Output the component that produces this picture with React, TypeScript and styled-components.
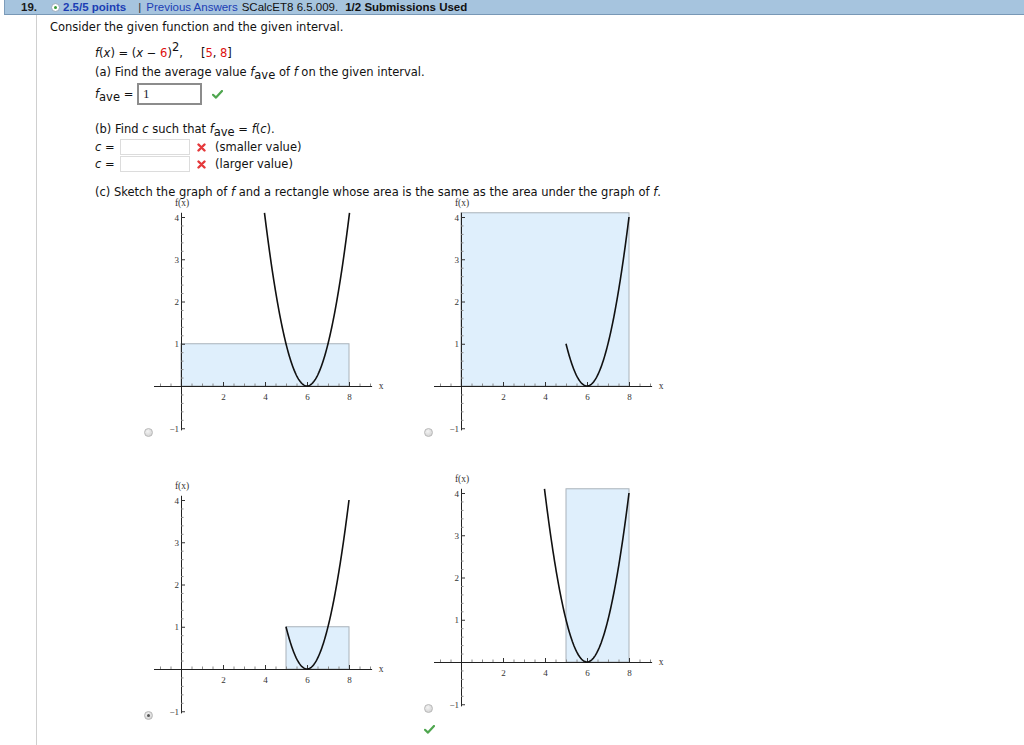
import React from 'react';
import styled, { createGlobalStyle } from 'styled-components';

const GlobalStyle = createGlobalStyle`
  html, body {
    margin: 0;
    padding: 0;
    background: #fff;
  }
  body {
    font-family: "DejaVu Sans", Verdana, sans-serif;
    color: #111;
  }
`;

const Page = styled.div`
  display: flex;
  flex-direction: column;
  width: 1024px;
  height: 745px;
  overflow: hidden;
`;

const HeaderBar = styled.div`
  display: flex;
  align-items: center;
  margin-left: 4px;
  height: 14px;
  padding-left: 16px;
  background: #a6c4de;
  border-left: 1px solid #7e9dbb;
  border-bottom: 1px solid #7898b6;
  font-family: "Liberation Sans", Arial, sans-serif;
  font-size: 11.5px;
  line-height: 14px;
  white-space: nowrap;
`;

const QNum = styled.span`
  font-weight: bold;
  color: #1a1a1a;
  width: 30px;
`;

const Points = styled.span`
  display: flex;
  align-items: center;
  gap: 3px;
  font-weight: bold;
  color: #1b3db4;
`;

const Dot = styled.span`
  position: relative;
  width: 7px;
  height: 7px;
  border-radius: 50%;
  background: #fff;
  border: 1px solid #9ab;
  &::after {
    content: '';
    position: absolute;
    left: 2px;
    top: 2px;
    width: 3px;
    height: 3px;
    border-radius: 50%;
    background: #3a9a3a;
  }
`;

const Sep = styled.span`
  color: #333;
  margin: 0 5px 0 12px;
`;

const Link = styled.span`
  color: #1b3db4;
  margin-right: 4px;
`;

const Plain = styled.span<{ $bold?: boolean }>`
  color: #111;
  font-weight: ${(p) => (p.$bold ? 'bold' : 'normal')};
  margin-right: 7px;
`;

const Main = styled.div`
  flex: 1;
  margin-left: 36px;
  border-left: 1px solid #cfcfcf;
  padding-left: 13px;
  font-size: 11.5px;
`;

const Row = styled.div<{ $top: number; $h: number; $indent?: boolean }>`
  display: flex;
  align-items: center;
  margin-top: ${(p) => p.$top}px;
  height: ${(p) => p.$h}px;
  padding-left: ${(p) => (p.$indent ? 45 : 0)}px;
  line-height: 16px;
  white-space: nowrap;
`;

const Text = styled.span`
  display: inline-block;
  line-height: 16px;
`;

const I = styled.i`
  font-style: italic;
`;

const Red = styled.span`
  color: #e01010;
`;

const Sub = styled.sub`
  font-size: 11.5px;
  vertical-align: -3px;
  line-height: 0;
`;

const Sup = styled.sup`
  font-size: 11.5px;
  vertical-align: 6px;
  line-height: 0;
`;

const Gap = styled.span<{ $w: number }>`
  display: inline-block;
  width: ${(p) => p.$w}px;
`;

const Label = styled.span<{ $w: number }>`
  display: inline-block;
  width: ${(p) => p.$w}px;
`;

const AnswerBox = styled.div`
  box-sizing: border-box;
  width: 65px;
  height: 22px;
  border: 2px solid #8c8c8c;
  padding-left: 4px;
  font-family: "Liberation Serif", "Times New Roman", serif;
  font-size: 13px;
  line-height: 17px;
  color: #223;
`;

const EmptyBox = styled.div`
  box-sizing: border-box;
  width: 70px;
  height: 16px;
  border: 1px solid #dcdcdc;
`;

const Mark = styled.span<{ $l: number; $r: number }>`
  display: inline-flex;
  margin-left: ${(p) => p.$l}px;
  margin-right: ${(p) => p.$r}px;
`;

const GraphGrid = styled.div`
  display: grid;
  grid-template-columns: 280px 280px;
  row-gap: 32px;
  align-items: center;
  margin-left: 94px;
  margin-top: -3px;
`;

const Cell = styled.div`
  display: flex;
  flex-direction: column;
`;

const CellTop = styled.div`
  display: flex;
  align-items: flex-end;
`;

const Radio = styled.span<{ $checked?: boolean }>`
  position: relative;
  box-sizing: border-box;
  width: 9px;
  height: 9px;
  margin-bottom: 3px;
  margin-right: 1px;
  border-radius: 50%;
  border: 1px solid #b8b8b8;
  background: radial-gradient(circle at 40% 35%, #f4f4f4, #cbcbcb);
  flex-shrink: 0;
  &::after {
    content: '';
    display: ${(p) => (p.$checked ? 'block' : 'none')};
    position: absolute;
    left: 2px;
    top: 2px;
    width: 3px;
    height: 3px;
    border-radius: 50%;
    background: #555;
  }
`;

const CheckRow = styled.div`
  height: 14px;
  padding-top: 7px;
  box-sizing: border-box;
`;

const Check = () => (
  <svg width="11" height="9" viewBox="0 0 11 9">
    <path d="M1 4.8 L4 7.6 L10 1" fill="none" stroke="#4fa64f" strokeWidth="2.2" strokeLinecap="round" strokeLinejoin="round" />
  </svg>
);

const Cross = () => (
  <svg width="9" height="9" viewBox="0 0 9 9">
    <path d="M1.5 1.5 L7.5 7.5 M7.5 1.5 L1.5 7.5" stroke="#e5393b" strokeWidth="2.4" strokeLinecap="round" />
  </svg>
);

// graph geometry, shared by all four plots
const UX = 21;
const UY = 42.25;
const OX = 27;
const OY = 190;
const W = 240;
const H = 244;
const sx = (x: number) => OX + x * UX;
const sy = (y: number) => OY - y * UY;
const TOP = 4.1;

type GraphProps = { rect: [number, number, number]; curve: [number, number] };

const Graph = ({ rect, curve }: GraphProps) => {
  const lim = Math.sqrt(TOP);
  const a = Math.max(curve[0], 6 - lim);
  const b = Math.min(curve[1], 6 + lim);
  const pts: string[] = [];
  for (let i = 0; i <= 100; i++) {
    const x = a + ((b - a) * i) / 100;
    pts.push(`${sx(x).toFixed(2)},${sy((x - 6) ** 2).toFixed(2)}`);
  }
  const xTicks: number[] = [];
  for (let x = -1; x <= 9.01; x += 0.5) xTicks.push(Math.round(x * 10) / 10);
  const yTicks: number[] = [];
  for (let y = -1; y <= 4.01; y += 0.2) yTicks.push(Math.round(y * 10) / 10);
  const [rx0, rx1, ry1] = rect;

  return (
    <svg width={W} height={H} viewBox={`0 0 ${W} ${H}`} style={{ display: 'block' }}>
      <rect
        x={sx(rx0)}
        y={sy(ry1)}
        width={sx(rx1) - sx(rx0)}
        height={sy(0) - sy(ry1)}
        fill="#dfeffc"
        stroke="#a9b2ba"
        strokeWidth="1"
      />
      <line x1={0} y1={OY + 0.5} x2={sx(9.1)} y2={OY + 0.5} stroke="#222" strokeWidth="1" />
      <line x1={OX + 0.5} y1={sy(TOP)} x2={OX + 0.5} y2={sy(-1.05)} stroke="#222" strokeWidth="1" />
      {xTicks
        .filter((x) => x !== 0)
        .map((x) => {
          const major = Number.isInteger(x) && x % 2 === 0;
          return (
            <line
              key={`x${x}`}
              x1={sx(x) + 0.5}
              x2={sx(x) + 0.5}
              y1={OY}
              y2={OY - (major ? 4 : 2.5)}
              stroke={major ? '#333' : '#8a8a8a'}
              strokeWidth="1"
            />
          );
        })}
      {yTicks
        .filter((y) => y !== 0)
        .map((y) => {
          const major = Number.isInteger(y);
          return (
            <line
              key={`y${y}`}
              x1={OX}
              x2={OX + (major ? 4 : 2.5)}
              y1={sy(y) + 0.5}
              y2={sy(y) + 0.5}
              stroke={major ? '#333' : '#8a8a8a'}
              strokeWidth="1"
            />
          );
        })}
      <g fontFamily='"Liberation Serif", "Times New Roman", serif' fontSize="9" fill="#333">
        {[2, 4, 6, 8].map((x) => (
          <text key={x} x={sx(x) + 0.5} y={OY + 14} textAnchor="middle">
            {x}
          </text>
        ))}
        {[4, 3, 2, 1, -1].map((y) => (
          <text key={y} x={OX - 2} y={sy(y) + 3.5} textAnchor="end">
            {y < 0 ? `\u2212${-y}` : y}
          </text>
        ))}
        <text x={sx(9.1) + 9} y={OY + 3} textAnchor="middle" fontSize="9.5">
          x
        </text>
        <text x={OX + 1} y={10} textAnchor="middle" fontSize="9.5">
          f(x)
        </text>
      </g>
      <polyline points={pts.join(' ')} fill="none" stroke="#111" strokeWidth="1.6" strokeLinejoin="round" />
    </svg>
  );
};

const fave = (
  <>
    <I>f</I>
    <Sub>ave</Sub>
  </>
);

const App = () => (
  <Page>
    <GlobalStyle />
    <HeaderBar>
      <QNum>19.</QNum>
      <Points>
        <Dot />
        2.5/5 points
      </Points>
      <Sep>|</Sep>
      <Link>Previous Answers</Link>
      <Plain>SCalcET8 6.5.009.</Plain>
      <Plain $bold>1/2 Submissions Used</Plain>
    </HeaderBar>
    <Main>
      <Row $top={4} $h={16}>
        <Text>Consider the given function and the given interval.</Text>
      </Row>
      <Row $top={9} $h={18} $indent>
        <Text>
          <I>f</I>(<I>x</I>) = (<I>x</I> &minus; <Red>6</Red>)<Sup>2</Sup>,<Gap $w={18} />[<Red>5</Red>,{' '}
          <Red>8</Red>]
        </Text>
      </Row>
      <Row $top={1} $h={18} $indent>
        <Text>
          (a) Find the average value {fave} of <I>f</I> on the given interval.
        </Text>
      </Row>
      <Row $top={2} $h={22} $indent>
        <Label $w={42}>{fave} =</Label>
        <AnswerBox>1</AnswerBox>
        <Mark $l={10} $r={0}>
          <Check />
        </Mark>
      </Row>
      <Row $top={15} $h={18} $indent>
        <Text>
          (b) Find <I>c</I> such that {fave} = <I>f</I>(<I>c</I>).
        </Text>
      </Row>
      <Row $top={1} $h={16} $indent>
        <Label $w={25}>
          <I>c</I> =
        </Label>
        <EmptyBox />
        <Mark $l={7} $r={9}>
          <Cross />
        </Mark>
        <Text>(smaller value)</Text>
      </Row>
      <Row $top={1} $h={16} $indent>
        <Label $w={25}>
          <I>c</I> =
        </Label>
        <EmptyBox />
        <Mark $l={7} $r={9}>
          <Cross />
        </Mark>
        <Text>(larger value)</Text>
      </Row>
      <Row $top={12} $h={15} $indent>
        <Text>
          (c) Sketch the graph of <I>f</I> and a rectangle whose area is the same as the area under the graph of <I>f</I>.
        </Text>
      </Row>
      <GraphGrid>
        <Cell>
          <CellTop>
            <Radio />
            <Graph rect={[0, 8, 1]} curve={[3, 9]} />
          </CellTop>
        </Cell>
        <Cell>
          <CellTop>
            <Radio />
            <Graph rect={[0, 8, TOP]} curve={[5, 8]} />
          </CellTop>
        </Cell>
        <Cell>
          <CellTop>
            <Radio $checked />
            <Graph rect={[5, 8, 1]} curve={[5, 8]} />
          </CellTop>
        </Cell>
        <Cell>
          <CellTop>
            <Radio />
            <Graph rect={[5, 8, TOP]} curve={[3, 8]} />
          </CellTop>
          <CheckRow>
            <Check />
          </CheckRow>
        </Cell>
      </GraphGrid>
    </Main>
  </Page>
);

export default App;
